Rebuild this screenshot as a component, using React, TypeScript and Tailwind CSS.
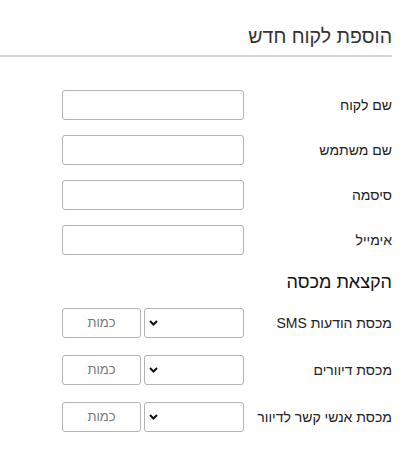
import React from "react";

const font = { fontFamily: '"Liberation Sans", Arial, "DejaVu Sans", sans-serif' };

function Chevron() {
  return (
    <svg width="9" height="6" viewBox="0 0 9 6" className="shrink-0">
      <path d="M1 1 L4.5 4.5 L8 1" fill="none" stroke="#111" strokeWidth="2" />
    </svg>
  );
}

function TextRow({ label }: { label: string }) {
  return (
    <div className="flex items-center h-[30px] pl-[62px]">
      <div className="flex-1 text-right text-[14px] text-[#222]">{label}</div>
      <div className="w-[182px] h-[30px] border border-[#b3b3b3] rounded-[3px] bg-white" />
    </div>
  );
}

function QuotaRow({ label }: { label: string }) {
  return (
    <div className="flex items-center h-[30px] pl-[62px]">
      <div className="flex-1 text-right text-[14px] text-[#222]">{label}</div>
      <div className="w-[100px] h-[30px] border border-[#b3b3b3] rounded-[3px] bg-white flex items-center justify-end pl-[4px]">
        <div className="flex-1" />
        <Chevron />
      </div>
      <div className="w-[3px]" />
      <div className="w-[79px] h-[30px] border border-[#b3b3b3] rounded-[3px] bg-white flex items-center justify-center text-[13px] text-[#777]">
        כמות
      </div>
    </div>
  );
}

export default function App() {
  return (
    <div dir="rtl" className="w-[392px] bg-white" style={font}>
      <h1 className="pt-[24px] text-[19.5px] leading-[24px] text-[#333] text-right font-normal">הוספת לקוח חדש</h1>
      <div className="mt-[7px] h-[2px] bg-[#d3d3d3]" />
      <div className="mt-[33px] flex flex-col gap-[15px]">
        <TextRow label="שם לקוח" />
        <TextRow label="שם משתמש" />
        <TextRow label="סיסמה" />
        <TextRow label="אימייל" />
      </div>
      <h2 className="mt-[16px] text-[18px] leading-[22px] text-[#111] text-right font-normal">הקצאת מכסה</h2>
      <div className="mt-[15px] flex flex-col gap-[17px]">
        <QuotaRow label="מכסת הודעות SMS" />
        <QuotaRow label="מכסת דיוורים" />
        <QuotaRow label="מכסת אנשי קשר לדיוור" />
      </div>
    </div>
  );
}
